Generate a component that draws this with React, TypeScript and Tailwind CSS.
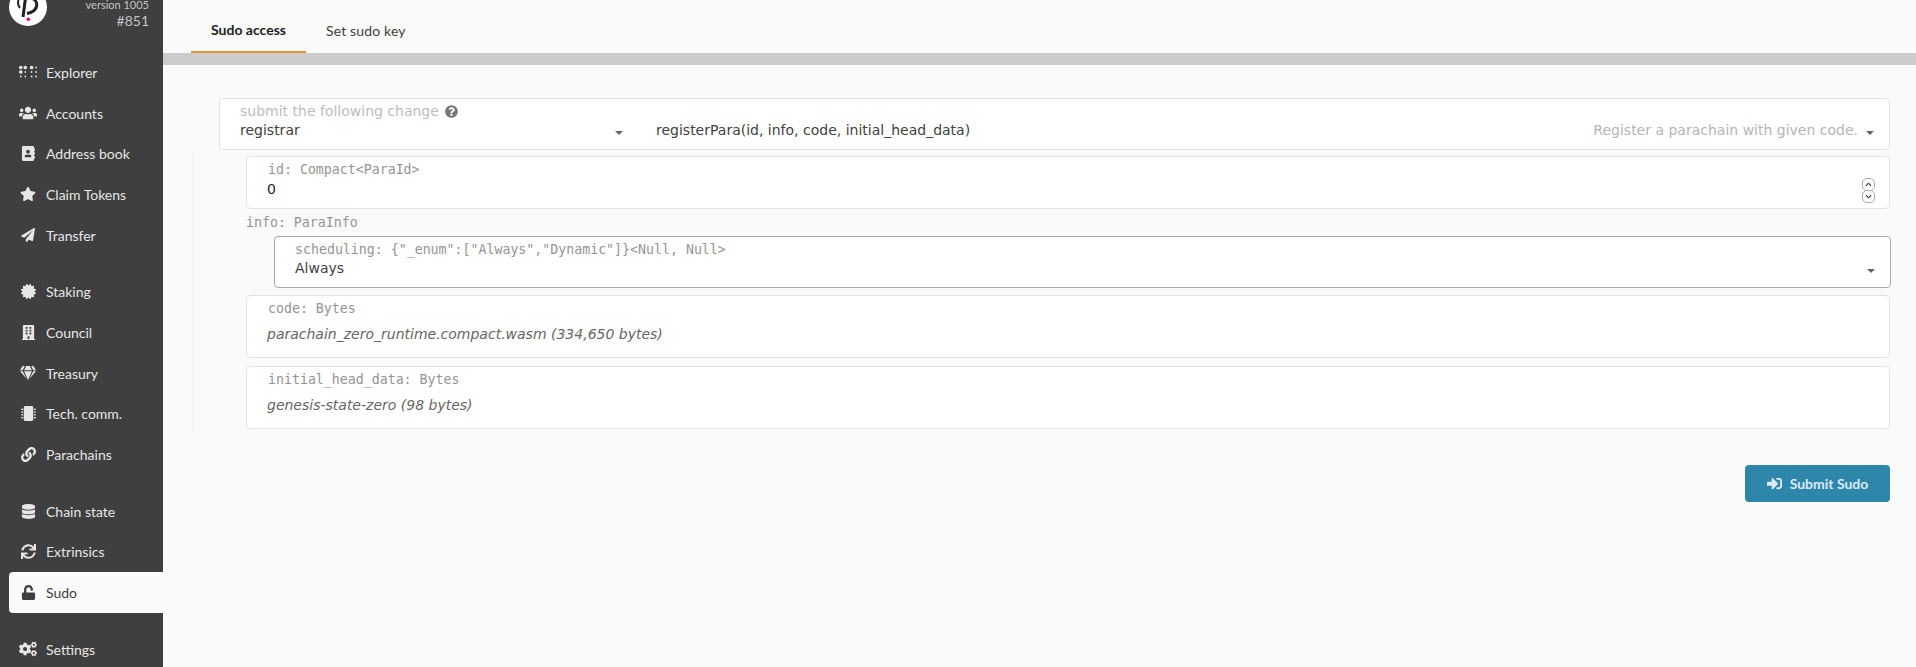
import React from 'react';
import {
  FaAddressBook,
  FaBraille,
  FaBuilding,
  FaCertificate,
  FaCogs,
  FaDatabase,
  FaGem,
  FaLink,
  FaMicrochip,
  FaPaperPlane,
  FaQuestionCircle,
  FaSignInAlt,
  FaStar,
  FaSync,
  FaUnlock,
  FaUsers,
} from 'react-icons/fa';

const navGroups = [
  [
    { label: 'Explorer', icon: FaBraille, size: 'w-[18px] h-[18px]' },
    { label: 'Accounts', icon: FaUsers, size: 'w-[18px] h-[18px]' },
    { label: 'Address book', icon: FaAddressBook, size: 'w-[15px] h-[15px]' },
    { label: 'Claim Tokens', icon: FaStar, size: 'w-[16px] h-[16px]' },
    { label: 'Transfer', icon: FaPaperPlane, size: 'w-[14px] h-[14px]' },
  ],
  [
    { label: 'Staking', icon: FaCertificate, size: 'w-[15px] h-[15px]' },
    { label: 'Council', icon: FaBuilding, size: 'w-[15px] h-[15px]' },
    { label: 'Treasury', icon: FaGem, size: 'w-[16px] h-[16px]' },
    { label: 'Tech. comm.', icon: FaMicrochip, size: 'w-[15px] h-[15px]' },
    { label: 'Parachains', icon: FaLink, size: 'w-[15px] h-[15px]' },
  ],
  [
    { label: 'Chain state', icon: FaDatabase, size: 'w-[15px] h-[15px]' },
    { label: 'Extrinsics', icon: FaSync, size: 'w-[15px] h-[15px]' },
    { label: 'Sudo', icon: FaUnlock, size: 'w-[15px] h-[15px]', active: true },
  ],
  [{ label: 'Settings', icon: FaCogs, size: 'w-[18px] h-[18px]' }],
];

const Caret = () => (
  <span className="inline-block w-0 h-0 mt-[5px] border-x-[4px] border-x-transparent border-t-[4px] border-t-[#666]" />
);

const Logo = () => (
  <svg viewBox="0 0 38 38" className="w-[38px] h-[38px] shrink-0">
    <circle cx="19" cy="19" r="19" fill="#fff" />
    <path d="M9.5 12 C8.5 15.5 9 18 11 20" fill="none" stroke="#222" strokeWidth="2" />
    <path d="M16.5 10 L14 29" fill="none" stroke="#222" strokeWidth="3" />
    <path d="M21 10 C30 11 31 23 18 25.5" fill="none" stroke="#222" strokeWidth="3" />
    <circle cx="19.3" cy="31.3" r="1.8" fill="#e6007a" />
  </svg>
);

const Sidebar = () => (
  <aside className="w-[163px] shrink-0 bg-[#3f3f3f] font-['Lato',sans-serif] text-[14px] overflow-hidden">
    <div className="flex justify-between pl-[9px] pr-[14px] -mt-[12px] h-[51px]">
      <Logo />
      <div className="text-right text-[#c4c4c4] pt-[10px]">
        <div className="text-[11px] leading-[14px]">version 1005</div>
        <div className="text-[14px] leading-[20px] -mt-px">#851</div>
      </div>
    </div>
    <nav className="flex flex-col gap-[16px] pl-[9px] mt-[13px]">
      {navGroups.map((group, i) => (
        <div key={i} className="flex flex-col">
          {group.map(({ label, icon: Icon, size, active }) => (
            <div
              key={label}
              className={`flex items-center h-[40.7px] pl-[10px] rounded-l ${active ? 'bg-[#fafafa] text-[#3f3f3f]' : 'text-[#e6e6e6]'}`}
            >
              <span className="w-[18px] flex justify-center">
                <Icon className={size} />
              </span>
              <span className="ml-[9px]">{label}</span>
            </div>
          ))}
        </div>
      ))}
    </nav>
  </aside>
);

const Label = ({ children }: { children: React.ReactNode }) => (
  <div className="font-['DejaVu_Sans_Mono',monospace] text-[13.25px] leading-[18px] text-[#949494] whitespace-nowrap">
    {children}
  </div>
);

const FileParam = ({ label, value }: { label: string; value: string }) => (
  <div className="h-[63px] bg-white border border-[#e3e3e3] rounded pl-[20px] pt-[4px]">
    <div className="pl-[1px]">
      <Label>{label}</Label>
    </div>
    <div className="italic text-[14px] text-[#666] mt-[6px]">{value}</div>
  </div>
);

export default function App() {
  return (
    <div className="flex h-screen overflow-hidden bg-[#fafafa] font-['DejaVu_Sans',sans-serif]">
      <Sidebar />
      <main className="flex-1 min-w-0">
        {/* Tabs */}
        <div className="flex h-[53px] pl-[28px] font-['Lato',sans-serif] text-[14px]">
          <div className="flex items-center pt-[8px] px-[20px] font-bold text-[#222] border-b-[2px] border-[#e69138]">Sudo access</div>
          <div className="flex items-center pt-[7px] px-[20px] text-[#3f3f3f] tracking-[0.15px]">Set sudo key</div>
        </div>
        <div className="h-[12px] bg-[#cccccc]" />

        <div className="pl-[29px] pr-[26px] pt-[33px]">
          {/* Module + method selector */}
          <div className="ml-[27px] h-[52px] flex bg-white border border-[#e3e3e3] rounded pl-[20px] pr-[15px] pt-[3px] text-[14px]">
            <div className="w-[383px] shrink-0">
              <div className="flex items-center gap-[6px] text-[#bdbdbd] leading-[18px]">
                submit the following change
                <FaQuestionCircle className="text-[13px] text-[#777]" />
              </div>
              <div className="flex items-center justify-between leading-[20px] text-[#3f3f3f]">
                registrar
                <Caret />
              </div>
            </div>
            <div className="flex-1 flex items-center justify-between ml-[33px] pt-[18px] h-[38px] leading-[20px] text-[#3f3f3f]">
              <span>registerPara(id, info, code, initial_head_data)</span>
              <span className="flex items-center gap-[8px] text-[#b5b5b5]">
                Register a parachain with given code.
                <Caret />
              </span>
            </div>
          </div>

          {/* Params */}
          <div className="border-l-[2px] border-[#f5f5f5] pl-[52px] mt-[2px] pt-[4px] pb-[3px] flex flex-col">
            <div className="h-[53px] relative bg-white border border-[#e3e3e3] rounded pl-[21px] pt-[4px]">
              <Label>id: Compact&lt;ParaId&gt;</Label>
              <div className="text-[14px] leading-[20px] text-[#222] -ml-px">0</div>
              <div className="absolute right-[14px] top-[21px] flex flex-col -space-y-px">
                <span className="w-[13px] h-[13px] border border-[#aaa] rounded-[5px] flex items-center justify-center">
                  <svg viewBox="0 0 8 5" className="w-[7px] h-[5px]"><path d="M1 4 L4 1 L7 4" fill="none" stroke="#333" strokeWidth="1.3" /></svg>
                </span>
                <span className="w-[13px] h-[13px] border border-[#aaa] rounded-[5px] flex items-center justify-center">
                  <svg viewBox="0 0 8 5" className="w-[7px] h-[5px]"><path d="M1 1 L4 4 L7 1" fill="none" stroke="#333" strokeWidth="1.3" /></svg>
                </span>
              </div>
            </div>

            <div className="mt-[2px] h-[24px] flex items-center"><Label>info: ParaInfo</Label></div>

            <div className="border-l-[2px] border-[#f7f7f7] -ml-[28px] pl-[54px] pt-[1px] pb-[4px] -mr-px">
              <div className="h-[52px] bg-white border border-[#a9a9a9] rounded pl-[20px] pr-[15px] pt-[4px]">
                <Label>scheduling: {'{"_enum":["Always","Dynamic"]}'}&lt;Null, Null&gt;</Label>
                <div className="flex items-center justify-between text-[14px] leading-[20px] text-[#3f3f3f] -mt-px">
                  Always
                  <Caret />
                </div>
              </div>
            </div>

            <div className="mt-[3px] flex flex-col gap-[8px]">
              <FileParam label="code: Bytes" value="parachain_zero_runtime.compact.wasm (334,650 bytes)" />
              <FileParam label="initial_head_data: Bytes" value="genesis-state-zero (98 bytes)" />
            </div>
          </div>

          {/* Submit */}
          <div className="flex justify-end mt-[33px]">
            <button className="w-[145px] h-[37px] flex items-center justify-center gap-[8px] pb-px bg-[#2e86ab] rounded text-[#dbeaf5] font-['Lato',sans-serif] font-bold text-[14px]">
              <FaSignInAlt className="w-[15px] h-[15px]" />
              Submit Sudo
            </button>
          </div>
        </div>
      </main>
    </div>
  );
}
